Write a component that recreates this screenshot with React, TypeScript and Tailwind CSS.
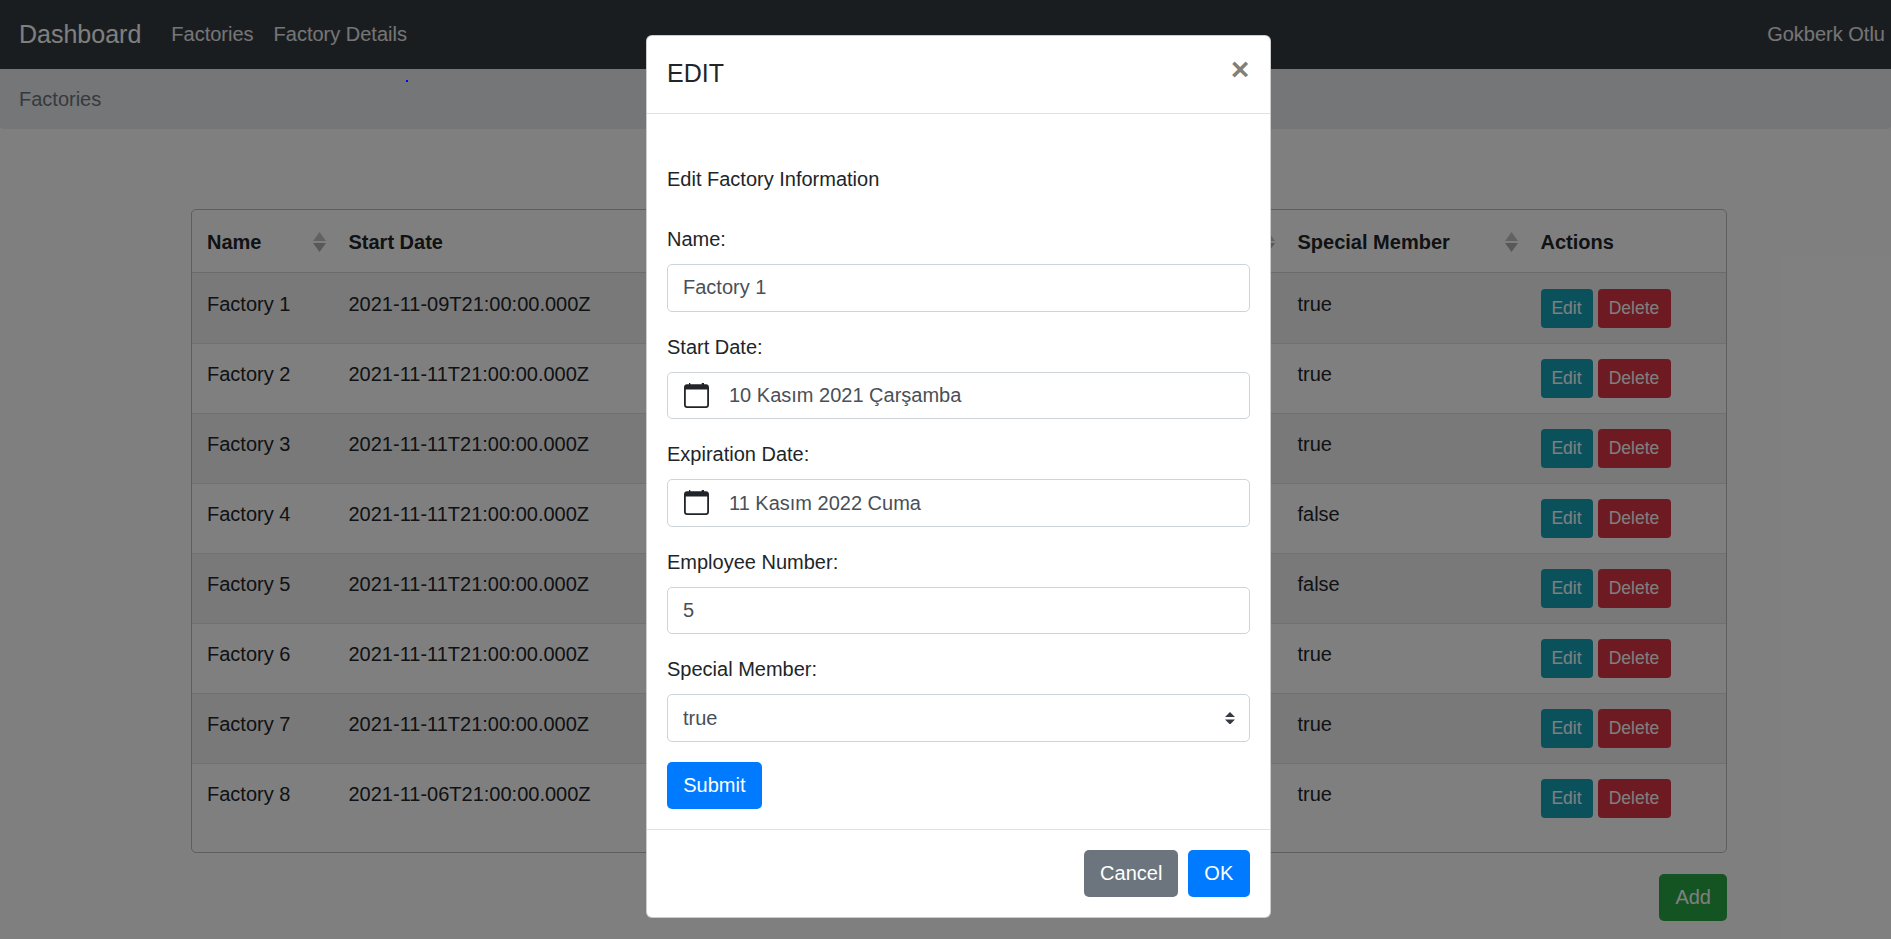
import React from "react";

const rows = [
  ["Factory 1", "2021-11-09T21:00:00.000Z", "true"],
  ["Factory 2", "2021-11-11T21:00:00.000Z", "true"],
  ["Factory 3", "2021-11-11T21:00:00.000Z", "true"],
  ["Factory 4", "2021-11-11T21:00:00.000Z", "false"],
  ["Factory 5", "2021-11-11T21:00:00.000Z", "false"],
  ["Factory 6", "2021-11-11T21:00:00.000Z", "true"],
  ["Factory 7", "2021-11-11T21:00:00.000Z", "true"],
  ["Factory 8", "2021-11-06T21:00:00.000Z", "true"],
];

const SortIcon = () => (
  <svg width="13" height="20" viewBox="0 0 13 20" className="shrink-0">
    <path d="M6.5 0L13 9H0z" fill="#c4c4c4" />
    <path d="M6.5 20L13 11H0z" fill="#b0b0b0" />
  </svg>
);

const CalendarIcon = () => (
  <svg width="25" height="25" viewBox="0 0 25 25" className="shrink-0">
    <path
      d="M5 0h1.3v1.3h11.4V0H20v1.3h2c1.7 0 3 1.3 3 3V22c0 1.7-1.3 3-3 3H3c-1.7 0-3-1.3-3-3V4.3c0-1.7 1.3-3 3-3h2zM1.8 6.5V22c0 .7.5 1.2 1.2 1.2h19c.7 0 1.2-.5 1.2-1.2V6.5z"
      fill="#212529"
      fillRule="evenodd"
    />
  </svg>
);

const SelectArrows = () => (
  <svg width="10" height="12.5" viewBox="0 0 4 5" className="absolute right-[15px] top-[17.5px] pointer-events-none">
    <path d="M2 0L0 2h4zm0 5L0 3h4z" fill="#343a40" />
  </svg>
);

const headers = ["Name", "Start Date", "", "", "Special Member"];

const Field = ({ label, children }: { label: string; children: React.ReactNode }) => (
  <div className="mb-5">
    <label className="block mb-[10px] leading-[30px]">{label}</label>
    {children}
  </div>
);

const inputClass =
  "block w-full h-[47.5px] px-[15px] border border-[#ced4da] rounded-[5px] bg-white text-[#495057] text-[20px] outline-none";

const DateField = ({ value }: { value: string }) => (
  <div className="flex items-center gap-[20px] w-full h-[47.5px] px-[16px] border border-[#ced4da] rounded-[5px] bg-white text-[#495057]">
    <CalendarIcon />
    <span>{value}</span>
  </div>
);

export default function App() {
  return (
    <div
      className="relative h-[939px] overflow-hidden bg-white text-[20px] leading-[30px] text-[#212529]"
      style={{ fontFamily: '"Liberation Sans", Arial, sans-serif' }}
    >
      <nav className="flex items-center h-[69px] pb-[2px] pl-[19px] pr-[6px] bg-[#343a40]">
        <a className="text-[25px] text-white mr-[20px]">Dashboard</a>
        <a className="px-[10px] text-white/90">Factories</a>
        <a className="px-[10px] text-white/90">Factory Details</a>
        <span className="ml-auto text-white/90">Gokberk Otlu</span>
      </nav>

      <div className="flex items-center h-[60px] pl-[19px] bg-[#e9ecef] rounded-b-[4px] text-[#6c757d]">Factories</div>

      <main className="pl-[191px] pr-[164px] pt-[80px]">
        <div className="border border-[#bdbdbd] rounded-[5px] pb-[19px] overflow-hidden">
          <table className="w-full table-fixed border-separate border-spacing-0">
            <colgroup>
              <col className="w-[141.5px]" />
              <col className="w-[340px]" />
              <col className="w-[300px]" />
              <col className="w-[309px]" />
              <col className="w-[243px]" />
              <col />
            </colgroup>
            <thead>
              <tr>
                {headers.map((h, i) => (
                  <th key={i} className="pt-[16.5px] pb-[15px] pl-[15px] pr-[8px] border-b-[1.5px] border-[#d4d7da] text-left font-bold">
                    <div className="flex items-center justify-between h-[30px] whitespace-nowrap">
                      <span>{h}</span>
                      <SortIcon />
                    </div>
                  </th>
                ))}
                <th className="pt-[16.5px] pb-[15px] px-[15px] border-b-[1.5px] border-[#d4d7da] text-left font-bold">Actions</th>
              </tr>
            </thead>
            <tbody>
              {rows.map((r, i) => {
                const top = i === 0 ? "pt-[16px]" : "pt-[15px] border-t border-[#dee2e6]";
                const cell = `${top} px-[15px] pb-[15px] align-top whitespace-nowrap`;
                return (
                  <tr key={r[0]} className={i % 2 === 0 ? "bg-black/5" : ""}>
                    <td className={cell}>{r[0]}</td>
                    <td className={cell}>{r[1]}</td>
                    <td className={cell} />
                    <td className={cell} />
                    <td className={cell}>{r[2]}</td>
                    <td className={cell}>
                      <div className="flex gap-[5px] text-[17.5px] text-white leading-[26px]">
                        <button className="h-[39px] w-[52px] rounded-[4px] bg-[#17a2b8]">Edit</button>
                        <button className="h-[39px] w-[73px] rounded-[4px] bg-[#dc3545]">Delete</button>
                      </div>
                    </td>
                  </tr>
                );
              })}
            </tbody>
          </table>
        </div>
        <div className="flex justify-end mt-[21px]">
          <button className="h-[47.5px] px-[16px] rounded-[5px] bg-[#28a745] text-white">Add</button>
        </div>
      </main>

      <div className="absolute inset-0 bg-black/50" />
      <div className="absolute left-[406px] top-[80px] w-[2px] h-[2px] bg-[#0000ff]" />

      <div className="absolute inset-0 pl-[646px] pt-[35px]">
        <div className="w-[624.5px] bg-white border border-black/20 rounded-[6px]">
          <header className="flex items-start justify-between h-[78px] pt-[19px] px-5 border-b border-[#dee2e6]">
            <h5 className="text-[25px] leading-[37.5px]">EDIT</h5>
            <button className="text-[32px] leading-[30px] font-bold text-black/50 -mt-[1px]">×</button>
          </header>
          <div className="px-5 pt-5 pb-[19.5px]">
            <p className="mt-[30px] mb-[30px]">Edit Factory Information</p>
            <Field label="Name:">
              <input readOnly value="Factory 1" className={inputClass} />
            </Field>
            <Field label="Start Date:">
              <DateField value="10 Kasım 2021 Çarşamba" />
            </Field>
            <Field label="Expiration Date:">
              <DateField value="11 Kasım 2022 Cuma" />
            </Field>
            <Field label="Employee Number:">
              <input readOnly value="5" className={inputClass} />
            </Field>
            <Field label="Special Member:">
              <div className="relative">
                <select className={`${inputClass} appearance-none`} defaultValue="true">
                  <option value="true">true</option>
                  <option value="false">false</option>
                </select>
                <SelectArrows />
              </div>
            </Field>
            <button className="h-[47.5px] px-[16.25px] rounded-[5px] bg-[#007bff] text-white">Submit</button>
          </div>
          <footer className="flex justify-end gap-[10px] p-5 border-t border-[#dee2e6]">
            <button className="h-[47.5px] px-[15.75px] rounded-[5px] bg-[#6c757d] text-white">Cancel</button>
            <button className="h-[47.5px] px-[16.25px] rounded-[5px] bg-[#007bff] text-white">OK</button>
          </footer>
        </div>
      </div>
    </div>
  );
}
